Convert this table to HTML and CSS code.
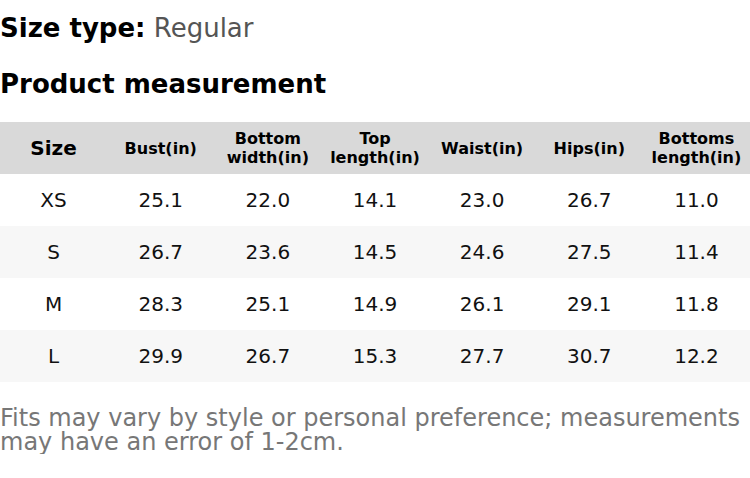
FILE: index.html
```html
<!DOCTYPE html>
<html>
<head>
<meta charset="utf-8">
<link rel="stylesheet" href="styles.css">
</head>
<body>
<div class="page">
  <p class="size-type"><b>Size type:</b> <span class="val">Regular</span></p>
  <h2 class="title">Product measurement</h2>
  <table class="chart">
    <thead>
      <tr>
        <th class="first">Size</th>
        <th>Bust(in)</th>
        <th>Bottom<br>width(in)</th>
        <th>Top<br>length(in)</th>
        <th>Waist(in)</th>
        <th>Hips(in)</th>
        <th>Bottoms<br>length(in)</th>
      </tr>
    </thead>
    <tbody>
      <tr><td>XS</td><td>25.1</td><td>22.0</td><td>14.1</td><td>23.0</td><td>26.7</td><td>11.0</td></tr>
      <tr><td>S</td><td>26.7</td><td>23.6</td><td>14.5</td><td>24.6</td><td>27.5</td><td>11.4</td></tr>
      <tr><td>M</td><td>28.3</td><td>25.1</td><td>14.9</td><td>26.1</td><td>29.1</td><td>11.8</td></tr>
      <tr><td>L</td><td>29.9</td><td>26.7</td><td>15.3</td><td>27.7</td><td>30.7</td><td>12.2</td></tr>
    </tbody>
  </table>
  <p class="note">Fits may vary by style or personal preference; measurements may have an error of 1-2cm.</p>
</div>
</body>
</html>
```
FILE: styles.css
```css
html, body {
  margin: 0;
  padding: 0;
  background: #fff;
}
.page {
  font-family: "DejaVu Sans", sans-serif;
  color: #000;
  width: 750px;
}
.size-type {
  margin: 0;
  padding-top: 10px;
  font-size: 26px;
  line-height: 36px;
}
.size-type .val {
  color: #555;
}
.title {
  margin: 0;
  padding-top: 20px;
  font-size: 26px;
  line-height: 36px;
  font-weight: bold;
}
.chart {
  margin-top: 20px;
  width: 750px;
  border-collapse: collapse;
  table-layout: fixed;
}
.chart th {
  background: #d9d9d9;
  height: 52px;
  padding: 0;
  font-size: 16px;
  line-height: 19px;
  font-weight: bold;
  text-align: center;
}
.chart th.first {
  font-size: 20px;
}
.chart td {
  height: 52px;
  padding: 0;
  font-size: 20px;
  text-align: center;
  color: #111;
}
.chart tbody tr:nth-child(even) td {
  background: #f7f7f7;
}
.note {
  margin: 24px 0 0;
  font-size: 24px;
  line-height: 24px;
  color: #777;
}
```
